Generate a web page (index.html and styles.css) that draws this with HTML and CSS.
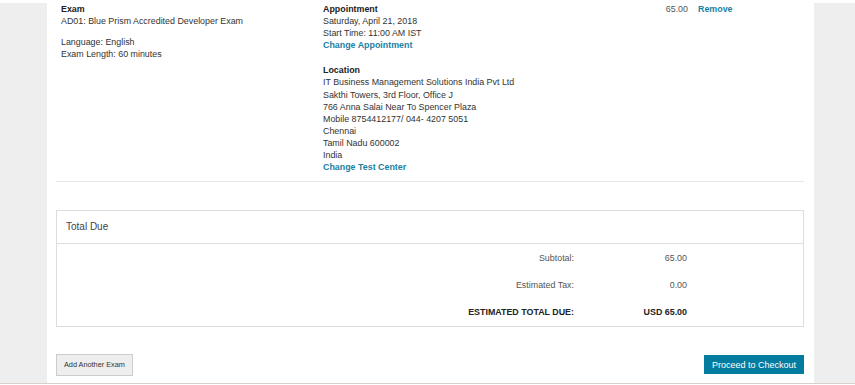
FILE: index.html
```html
<!DOCTYPE html>
<html lang="en">
<head>
  <meta charset="UTF-8">
  <meta name="viewport" content="width=device-width, initial-scale=1.0">
  <title>Cart</title>
  <link rel="stylesheet" href="styles.css">
</head>
<body>

<div class="top-strip"></div>

<div class="page">
  <div class="cart">

    <div class="cart-item">
      <div class="col">
        <div class="label">Exam</div>
        <div>AD01: Blue Prism Accredited Developer Exam</div>
        <div class="block">
          <div>Language: English</div>
          <div>Exam Length: 60 minutes</div>
        </div>
      </div>
      <div class="col">
        <div class="label">Appointment</div>
        <div>Saturday, April 21, 2018</div>
        <div>Start Time: 11:00 AM IST</div>
        <a class="link" href="#">Change Appointment</a>
        <div class="block loc">
          <div class="label">Location</div>
          <div>IT Business Management Solutions India Pvt Ltd</div>
          <div>Sakthi Towers, 3rd Floor, Office J</div>
          <div>766 Anna Salai Near To Spencer Plaza</div>
          <div>Mobile 8754412177/ 044- 4207 5051</div>
          <div>Chennai</div>
          <div>Tamil Nadu 600002</div>
          <div>India</div>
          <a class="link" href="#">Change Test Center</a>
        </div>
      </div>
      <div class="col price">65.00</div>
      <div class="col"><a class="link remove" href="#">Remove</a></div>
    </div>

    <div class="totals">
      <div class="totals-head">Total Due</div>
      <div class="totals-body">
        <div class="t-row">
          <span>Subtotal:</span>
          <span>65.00</span>
        </div>
        <div class="t-row">
          <span>Estimated Tax:</span>
          <span>0.00</span>
        </div>
        <div class="t-row grand">
          <span>ESTIMATED TOTAL DUE:</span>
          <span>USD 65.00</span>
        </div>
      </div>
    </div>

    <div class="actions">
      <button class="btn-add">Add Another Exam</button>
      <button class="btn-checkout">Proceed to Checkout</button>
    </div>

  </div>
</div>

<div class="bottom-line"></div>

</body>
</html>
```

FILE: styles.css
```css
:root {
  --page-bg: #eeeeee;
  --text-color: #333;
  --label-color: #222;
  --link-color: #1b7fa3;
  --line-color: #e6e6e6;
  --box-border: #dddddd;
  --checkout-bg: #037c9f;
}
html, body {
  height: 100%;
}
body {
  margin: 0;
  font-family: 'Liberation Sans', Arial, sans-serif;
  font-size: 8.9px;
  line-height: 12.1px;
  color: var(--text-color);
  background-color: #fff;
  display: flex;
  flex-direction: column;
  overflow: hidden;
}
.top-strip {
  height: 3px;
  background-color: #fff;
}
.page {
  flex: 1;
  background-color: var(--page-bg);
  display: flex;
  overflow: hidden;
}
.cart {
  margin-left: 47px;
  width: 767px;
  box-sizing: border-box;
  padding: 0 10px 0 9px;
  background-color: #fff;
}
.cart-item {
  display: grid;
  grid-template-columns: 262px 305px 60px 1fr;
  padding: 0 5px 8px;
  border-bottom: 1px solid var(--line-color);
}
.label {
  font-weight: bold;
  color: var(--label-color);
}
.block {
  margin-top: 9px;
}
.block.loc {
  margin-top: 13px;
}
.link {
  display: block;
  color: var(--link-color);
  font-weight: bold;
  text-decoration: none;
}
.price {
  text-align: right;
  color: #555;
}
.remove {
  padding-left: 10px;
}
.totals {
  margin-top: 28px;
  border: 1px solid var(--box-border);
}
.totals-head {
  padding: 9px 9px;
  font-size: 10px;
  line-height: 14px;
  color: #444;
  border-bottom: 1px solid var(--box-border);
}
.t-row {
  display: grid;
  grid-template-columns: 517px 113px;
  padding: 7.5px 0;
  text-align: right;
  color: #555;
}
.t-row.grand {
  font-weight: bold;
  color: var(--label-color);
}
.actions {
  margin-top: 27px;
  display: flex;
  justify-content: space-between;
  align-items: center;
}
button {
  font-family: 'Liberation Sans', Arial, sans-serif;
  cursor: pointer;
}
.btn-add {
  height: 22px;
  padding: 0 7px;
  font-size: 7.3px;
  color: #333;
  background-color: #eeeeee;
  border: 1px solid #cccccc;
}
.btn-checkout {
  height: 19px;
  padding: 0 8px;
  font-size: 9px;
  color: #fff;
  background-color: var(--checkout-bg);
  border: none;
}
.bottom-line {
  height: 1px;
  border-top: 1px solid #d8d0cb;
  background-color: #fff;
}
```
